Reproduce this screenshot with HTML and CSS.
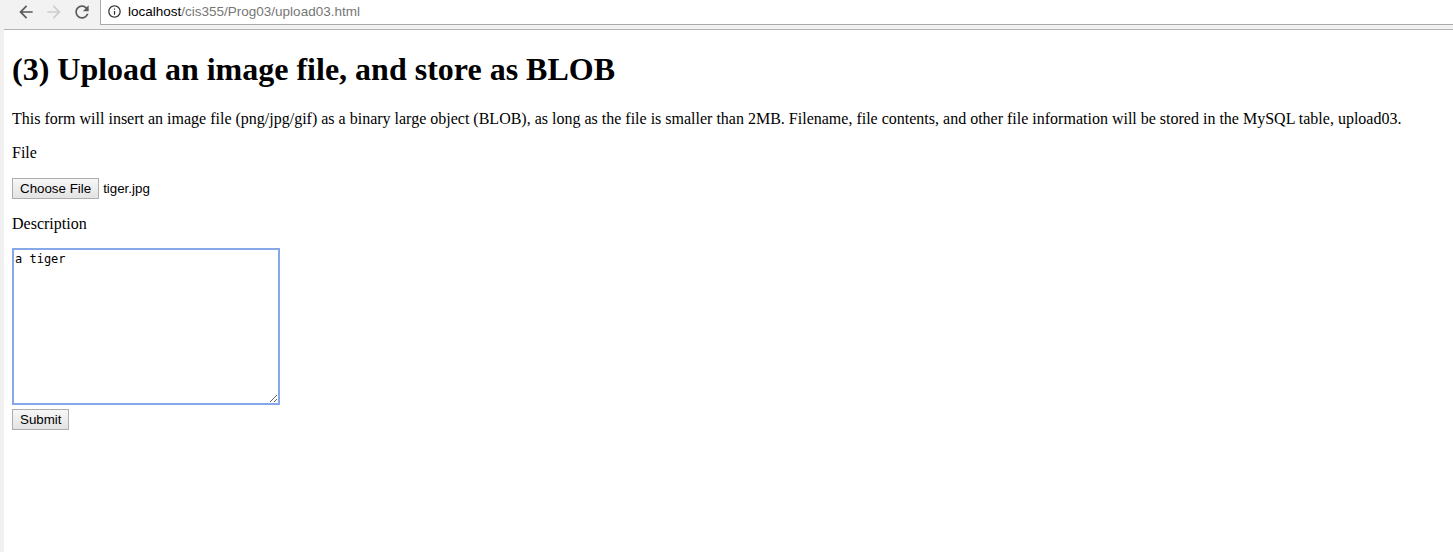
FILE: index.html
```html
<!DOCTYPE html>
<html lang="en">
<head>
<meta charset="utf-8">
<title>upload03</title>
<link rel="stylesheet" href="styles.css">
</head>
<body>
<div class="browser">
  <header class="chrome">
    <div class="toolbar">
      <nav class="nav">
        <span class="nav-btn back">
          <svg viewBox="0 0 24 24" width="20" height="20"><path d="M20 11H7.830l5.59-5.59L12 4l-8 8 8 8 1.41-1.41L7.83 13H20v-2z"/></svg>
        </span>
        <span class="nav-btn fwd">
          <svg viewBox="0 0 24 24" width="20" height="20"><path d="M12 4l-1.41 1.41L16.17 11H4v2h12.17l-5.58 5.59L12 20l8-8z"/></svg>
        </span>
        <span class="nav-btn reload">
          <svg viewBox="0 0 24 24" width="20" height="20"><path d="M17.65 6.35C16.2 4.9 14.21 4 12 4c-4.42 0-7.990 3.58-7.99 8s3.57 8 7.99 8c3.73 0 6.84-2.55 7.73-6h-2.08c-.82 2.33-3.04 4-5.65 4-3.31 0-6-2.69-6-6s2.69-6 6-6c1.66 0 3.14.69 4.22 1.78L13 11h7V4l-2.35 2.35z"/></svg>
        </span>
      </nav>
      <div class="urlbar">
        <svg class="info" viewBox="0 0 24 24" width="15" height="15"><path d="M11 7h2v2h-2zm0 4h2v6h-2zm1-9C6.48 2 2 6.48 2 12s4.48 10 10 10 10-4.48 10-10S17.52 2 12 2zm0 18c-4.41 0-8-3.59-8-8s3.59-8 8-8 8 3.59 8 8-3.59 8-8 8z"/></svg>
        <span class="url"><span class="host">localhost</span><span class="path">/cis355/Prog03/upload03.html</span></span>
      </div>
    </div>
    <div class="band"></div>
  </header>
  <div class="viewport">
    <div class="strip"></div>
    <main class="content">
      <h1>(3) Upload an image file, and store as BLOB</h1>
      <p>This form will insert an image file (png/jpg/gif) as a binary large object (BLOB), as long as the file is smaller than 2MB. Filename, file contents, and other file information will be stored in the MySQL table, upload03.</p>
      <form class="upload-form">
        <p>File</p>
        <p><button type="button" class="btn">Choose File</button> <span class="file-name">tiger.jpg</span></p>
        <p class="desc-label">Description</p>
        <textarea class="desc">a tiger</textarea>
        <button type="button" class="btn">Submit</button>
      </form>
    </main>
  </div>
</div>
</body>
</html>
```

FILE: styles.css
```css
html, body {
  margin: 0;
  padding: 0;
  height: 100%;
  background: #ffffff;
}

.browser {
  display: flex;
  flex-direction: column;
  height: 100%;
  font-family: "Liberation Serif", "Times New Roman", serif;
  font-size: 16px;
  color: #000;
}

.chrome {
  flex: none;
  background: #f2f2f2;
}

.toolbar {
  display: flex;
  height: 25px;
}

.nav {
  display: flex;
  align-items: center;
  width: 100px;
  padding-left: 16px;
  box-sizing: border-box;
  gap: 8px;
}

.nav-btn {
  display: flex;
  width: 20px;
  height: 20px;
  margin-top: -2px;
}

.back svg { fill: #5a5a5a; }
.fwd svg { fill: #cdcdcd; }
.reload svg { fill: #5a5a5a; }

.urlbar {
  flex: 1;
  display: flex;
  align-items: center;
  gap: 6px;
  background: #ffffff;
  border-left: 1px solid #a9a9a9;
  border-bottom: 1px solid #a9a9a9;
  box-sizing: border-box;
  padding-left: 6px;
  padding-bottom: 2px;
}

.info { fill: #333; }

.url {
  font-family: "Liberation Sans", Arial, sans-serif;
  font-size: 13.5px;
}

.host { color: #000; }
.path { color: #767676; }

.band {
  height: 5px;
  margin-left: 4px;
  box-sizing: border-box;
  border-bottom: 1px solid #b3b3b3;
}

.viewport {
  flex: 1;
  display: flex;
}

.strip {
  width: 4px;
  background: #f0f0f0;
}

.content {
  flex: 1;
  padding: 0 8px 8px;
}

h1 {
  font-size: 32px;
  font-weight: bold;
  margin: 21px 0 22px;
}

p {
  margin: 16px 0;
}

.desc-label {
  margin-bottom: 15px;
}

.btn {
  font-family: "Liberation Sans", Arial, sans-serif;
  font-size: 13.33px;
  color: #000;
  height: 21px;
  padding: 1px 7px;
  margin: 0;
  border: 1px solid #adadad;
  border-radius: 0;
  background: linear-gradient(#f7f7f7, #e3e3e3);
}

.file-name {
  font-family: "Liberation Sans", Arial, sans-serif;
  font-size: 13.33px;
}

.desc {
  display: block;
  width: 268px;
  height: 157px;
  box-sizing: border-box;
  margin: 0 0 4px;
  padding: 1px;
  border: 2px solid #86a8e8;
  border-radius: 0;
  outline: none;
  font-family: "DejaVu Sans Mono", monospace;
  font-size: 12px;
  line-height: 16px;
  color: #000;
}
```
